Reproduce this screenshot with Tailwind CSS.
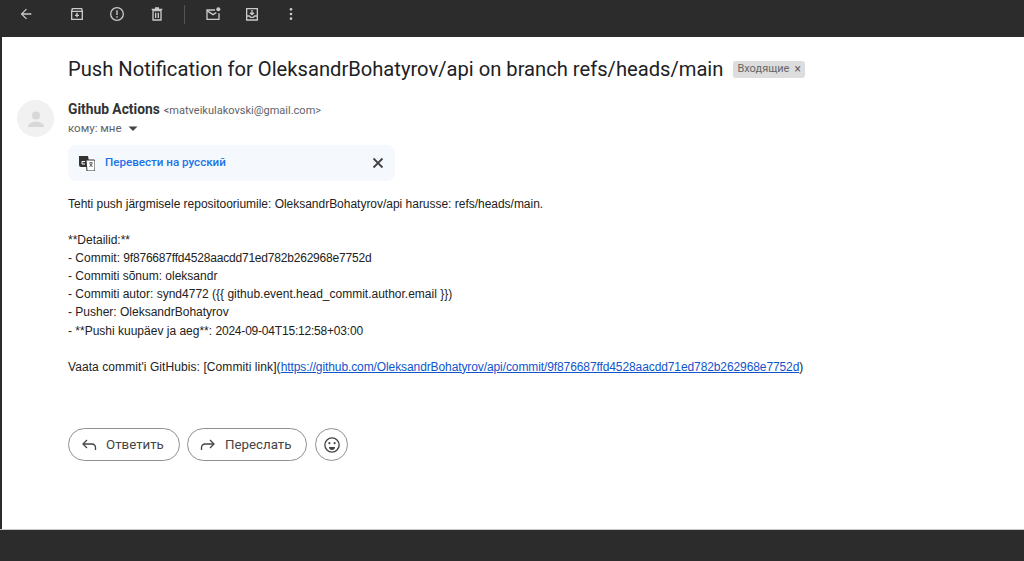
<!DOCTYPE html>
<html lang="ru">
<head>
  <meta charset="UTF-8" />
  <title>Push Notification</title>
  <script src="https://cdn.jsdelivr.net/npm/@tailwindcss/browser@4"></script>
</head>
<body class="h-[561px] w-[1024px] overflow-hidden flex flex-col bg-white font-['Roboto',sans-serif]">
  <!-- toolbar -->
  <header class="h-[37px] shrink-0 bg-[#2c2c2c] flex items-center pb-[9px] text-[#c9c9c9]">
    <svg class="ml-[18px] w-4 h-4" viewBox="0 0 24 24" fill="currentColor"><path d="M20 11H7.83l5.59-5.59L12 4l-8 8 8 8 1.41-1.41L7.83 13H20z"/></svg>
    <svg class="ml-[35px] w-4 h-4" viewBox="0 0 24 24" fill="none" stroke="currentColor" stroke-width="2"><path d="M4 8h16v12H4zM5 4h14l1 4H4z"/><path d="M12 10v7M9 14h6" /></svg>
    <svg class="ml-6 w-4 h-4" viewBox="0 0 24 24" fill="none" stroke="currentColor" stroke-width="2"><circle cx="12" cy="12" r="9.5"/><path d="M12 6.5v7M12 15.5v2"/></svg>
    <svg class="ml-6 w-4 h-4" viewBox="0 0 24 24" fill="none" stroke="currentColor" stroke-width="2"><path d="M6 7h12v14H6zM4 5h16M9 3h6M10 10v8M14 10v8"/></svg>
    <div class="ml-[19px] w-px h-[19px] bg-[#555]"></div>
    <svg class="ml-5 w-4 h-4" viewBox="0 0 24 24" fill="none" stroke="currentColor" stroke-width="2"><path d="M15 6H3v14h18v-9"/><path d="M3 7l9 6 5-3"/><circle cx="20" cy="5" r="3" fill="currentColor" stroke="none"/></svg>
    <svg class="ml-[23px] w-4 h-4" viewBox="0 0 24 24" fill="none" stroke="currentColor" stroke-width="2"><path d="M4 4h16v17H4zM4 15h4l2 2h4l2-2h4"/><path d="M12 6v7M9 10l3 3 3-3"/></svg>
    <svg class="ml-[23px] w-4 h-4" viewBox="0 0 24 24" fill="currentColor"><circle cx="12" cy="5" r="2"/><circle cx="12" cy="12" r="2"/><circle cx="12" cy="19" r="2"/></svg>
  </header>

  <div class="h-[493px] shrink-0 flex border-b border-[#c8c8c8]">
    <div class="w-0.5 bg-[#2c2c2c]"></div>
    <main class="flex-1 min-w-0">
      <!-- subject -->
      <div class="flex items-center pl-[66px] mt-[18px] h-7">
        <h1 class="text-[20.17px] text-[#202124] whitespace-nowrap">Push Notification for OleksandrBohatyrov/api on branch refs/heads/main</h1>
        <span class="ml-[10px] h-[17px] pl-1 pr-1 flex items-center gap-[5px] rounded-[3px] bg-[#dddddd] text-[11px] text-[#666]">Входящие <span class="text-[12px] leading-none">×</span></span>
      </div>

      <!-- sender -->
      <div class="flex mt-[17px] pl-[15px]">
        <div class="w-[37px] h-[37px] rounded-full bg-[#f1f1f1] flex items-center justify-center">
          <svg class="w-6 h-6" viewBox="0 0 24 24" fill="#d8d8d8"><circle cx="12" cy="8.5" r="4"/><path d="M4 19.500c0-3.400 5.300-5 8-5s8 1.600 8 5V20H4z"/></svg>
        </div>
        <div class="ml-[14px]">
          <div class="h-[19px] flex items-baseline whitespace-nowrap">
            <span class="text-[13.8px] font-bold text-[#333] leading-[19px]">Github Actions</span>
            <span class="ml-[4px] text-[11px] text-[#5f6368]">&lt;matveikulakovski@gmail.com&gt;</span>
          </div>
          <div class="h-[19px] flex items-center text-[11.5px] text-[#5f6368]">кому: мне
            <svg class="ml-[5px] w-3 h-3" viewBox="0 0 12 12" fill="#444"><path d="M1.500 3.500h9L6 8z"/></svg>
          </div>
        </div>
      </div>

      <!-- translate bar -->
      <div class="ml-[66px] mt-[7px] w-[327px] h-9 rounded-lg bg-[#f5f8fd] flex items-center">
        <svg class="ml-[11px] w-4 h-4" viewBox="0 0 16 16"><path d="M0 1h9l2 11H2a2 2 0 0 1-2-2z" fill="#333"/><path d="M7 5h8a1 1 0 0 1 1 1v9a1 1 0 0 1-1 1H8z" fill="#fff" stroke="#333"/><path d="M3 6.500h3M3 6.500v2.500h3" stroke="#fff" stroke-width="1" fill="none"/><path d="M10 8h4M12 7v1M10.500 12l2.500-3M11 9l2.500 3" stroke="#333" stroke-width="0.8" fill="none"/></svg>
        <span class="ml-[10px] text-[11.6px] font-medium text-[#1a73e8]">Перевести на русский</span>
        <svg class="ml-auto mr-[10px] w-[14px] h-[14px]" viewBox="0 0 14 14" stroke="#444" stroke-width="1.800" fill="none"><path d="M2.500 2.500l9 9M11.500 2.500l-9 9"/></svg>
      </div>

      <!-- body -->
      <div class="ml-[66px] mt-[14px] text-[12px] leading-[18.1px] text-[#222] whitespace-nowrap font-['Liberation_Sans',sans-serif]">
        <p class="tracking-[-0.02px]">Tehti push järgmisele repositooriumile: OleksandrBohatyrov/api harusse: refs/heads/main.</p>
        <p class="mt-[18px]">**Detailid:**</p>
        <p>- Commit: <span class="tracking-[-0.2px]">9f876687ffd4528aacdd71ed782b262968e7752d</span></p>
        <p>- Commiti sõnum: oleksandr</p>
        <p>- Commiti autor: synd4772 ({{ github.event.head_commit.author.email }})</p>
        <p>- Pusher: OleksandrBohatyrov</p>
        <p>- **Pushi kuupäev ja aeg**: <span class="tracking-[-0.2px]">2024-09-04T15:12:58+03:00</span></p>
        <p class="mt-[18px]"><span class="tracking-[0.08px]">Vaata commit'i GitHubis: [Commiti link](</span><a class="text-[#1155cc] underline tracking-[-0.1px]" href="#">https://github.com/OleksandrBohatyrov/api/commit/9f876687ffd4528aacdd71ed782b262968e7752d</a>)</p>
      </div>

      <!-- actions -->
      <div class="ml-[66px] mt-[52.5px] flex gap-[7px]">
        <button class="w-[112px] h-[33px] rounded-full border border-[#8f8f8f] flex items-center text-[13.300px] text-[#444]">
          <svg class="ml-[12px] mr-[9px] w-4 h-4" viewBox="0 0 16 16" fill="none" stroke="#444" stroke-width="1.300"><path d="M6 3 2 7l4 4"/><path d="M2 7h9a3.500 3.500 0 0 1 3.500 3.500V13"/></svg>
          Ответить
        </button>
        <button class="w-[120px] h-[33px] rounded-full border border-[#8f8f8f] flex items-center text-[13.300px] text-[#444]">
          <svg class="ml-[12px] mr-[9px] w-4 h-4" viewBox="0 0 16 16" fill="none" stroke="#444" stroke-width="1.300"><path d="M10 3l4 4-4 4"/><path d="M14 7H5a3.500 3.500 0 0 0-3.500 3.500V13"/></svg>
          Переслать
        </button>
        <button class="ml-px w-[33px] h-[33px] rounded-full border border-[#8f8f8f] flex items-center justify-center">
          <svg class="w-[18px] h-[18px]" viewBox="0 0 24 24" fill="none" stroke="#444" stroke-width="1.800"><circle cx="12" cy="12" r="9.500"/><circle cx="8.500" cy="9.500" r="1.400" fill="#444" stroke="none"/><circle cx="15.500" cy="9.500" r="1.400" fill="#444" stroke="none"/><path d="M8 14.500h8a4 4 0 0 1-8 0z" fill="#444" stroke="none"/></svg>
        </button>
      </div>
    </main>
  </div>
  <footer class="flex-1 bg-[#2c2c2c]"></footer>
</body>
</html>
